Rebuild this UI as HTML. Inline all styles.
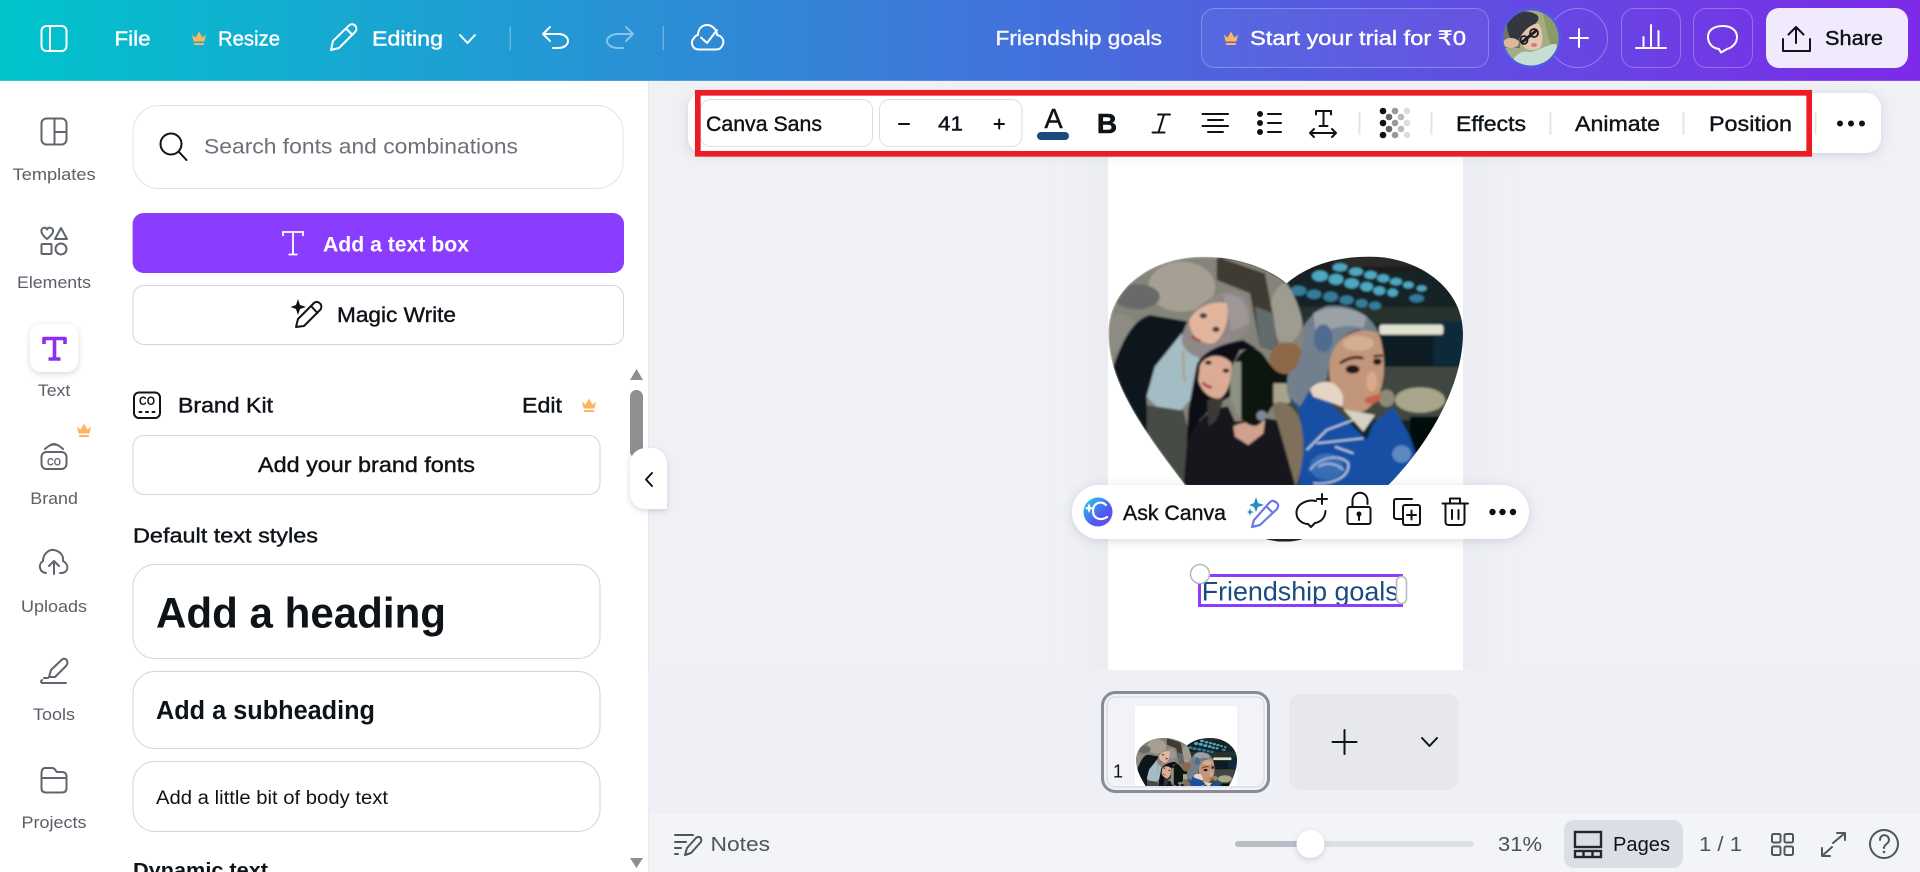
<!DOCTYPE html>
<html lang="en">
<head>
<meta charset="utf-8">
<title>Friendship goals</title>
<style>
html,body{margin:0;padding:0;width:1920px;height:872px;overflow:hidden;background:#f0f1f5}
svg{display:block}
text{font-family:"Liberation Sans","Noto Sans CJK SC",sans-serif;white-space:pre}
.m{stroke-width:.4px}
.wt{fill:#fff}.wm{fill:#fff;stroke:#fff}
.dk{fill:#0e1318}.dm{fill:#0e1318;stroke:#0e1318}
.gr{fill:#5a6068}
.ic{fill:none;stroke:#0e1318;stroke-width:2;stroke-linecap:round;stroke-linejoin:round}
.iw{fill:none;stroke:#fff;stroke-width:2;stroke-linecap:round;stroke-linejoin:round}
.ig{fill:none;stroke:#5f646d;stroke-width:2;stroke-linecap:round;stroke-linejoin:round}
</style>
</head>
<body>
<svg width="1920" height="872" viewBox="0 0 1920 872" xmlns="http://www.w3.org/2000/svg">
<defs>
<linearGradient id="hd" x1="0" x2="1" y1="0" y2="0"><stop offset="0" stop-color="#00c4cc"/><stop offset="1" stop-color="#7d2ae8"/></linearGradient>
<linearGradient id="lg" x1="0" x2="1" y1="0" y2="1"><stop offset="0" stop-color="#22d3ee"/><stop offset=".6" stop-color="#4f5cf0"/><stop offset="1" stop-color="#6b46e8"/></linearGradient>
<filter id="sh" x="-10%" y="-40%" width="120%" height="190%"><feDropShadow dx="0" dy="2" stdDeviation="5" flood-color="#40506a" flood-opacity=".2"/></filter>
<filter id="sh2" x="-40%" y="-40%" width="180%" height="180%"><feDropShadow dx="0" dy="2" stdDeviation="3" flood-color="#40506a" flood-opacity=".22"/></filter>
<filter id="bl" x="-5%" y="-5%" width="110%" height="110%"><feGaussianBlur stdDeviation="3.5"/></filter>
<filter id="bl2" x="-30%" y="-30%" width="160%" height="160%"><feGaussianBlur stdDeviation="14"/></filter>
<clipPath id="heart"><path d="M430 110C280 110 145 200 145 340C145 480 240 620 375 795L610 955Q675 975 735 955L985 795C1100 680 1209 500 1209 340C1209 200 1070 110 930 110C820 110 740 140 680 190C620 140 520 110 430 110Z"/></clipPath>
<clipPath id="lp"><path d="M430 110C280 110 145 200 145 340C145 480 240 620 375 795L610 955L708 800C735 720 735 640 715 590C695 550 660 535 640 555C615 590 605 620 580 618C540 610 510 560 510 500C510 430 540 385 575 385C620 385 625 460 675 462C710 460 735 400 730 330C725 270 700 220 680 190C620 140 520 110 430 110Z"/></clipPath>
<clipPath id="thc"><rect x="1135" y="706" width="102" height="80"/></clipPath>
<clipPath id="avc"><circle cx="1531" cy="38" r="27.5"/></clipPath>
<clipPath id="cv"><rect x="1108" y="150" width="355" height="520"/></clipPath>
<clipPath id="txc"><rect x="1198" y="570" width="200" height="40"/></clipPath>
<g id="crown"><path d="M1 4.5L4.6 7.6L8 1.5L11.4 7.6L15 4.5L13.4 11.5H2.6Z" fill="#fdb55f"/><rect x="3" y="13" width="10" height="2" rx=".6" fill="#fdb55f"/></g>
<g id="hearts">
 <g clip-path="url(#heart)">
  <g filter="url(#bl)">
   <!-- right photo -->
   <rect x="480" y="100" width="740" height="880" fill="#182428"/>
   <g transform="translate(120 90)">
    <rect x="560" y="15" width="540" height="50" fill="#1a1e1e"/>
    <rect x="700" y="20" width="300" height="30" fill="#2c2c28"/>
    <rect x="560" y="170" width="530" height="50" fill="#26332f"/>
    <rect x="840" y="258" width="260" height="95" fill="#0f1b20"/>
    <rect x="1000" y="215" width="100" height="130" fill="#10293a"/>
    <rect x="530" y="350" width="570" height="160" fill="#3f473f"/>
    <ellipse cx="960" cy="450" rx="75" ry="38" fill="#a8a68b"/>
    <ellipse cx="860" cy="445" rx="24" ry="26" fill="#8f8a75"/>
    <rect x="930" y="500" width="130" height="130" fill="#050a0a"/>
    <rect x="838" y="224" width="192" height="30" rx="8" fill="#e0e2d0"/>
    <g fill="#4fa8c2">
     <ellipse cx="720" cy="52" rx="22" ry="12"/><ellipse cx="768" cy="65" rx="21" ry="12"/><ellipse cx="812" cy="75" rx="19" ry="12"/><ellipse cx="850" cy="85" rx="18" ry="12"/><ellipse cx="888" cy="95" rx="18" ry="11"/><ellipse cx="925" cy="105" rx="16" ry="10"/><ellipse cx="965" cy="115" rx="15" ry="9"/>
     <ellipse cx="660" cy="78" rx="24" ry="16"/><ellipse cx="708" cy="88" rx="22" ry="16"/><ellipse cx="755" cy="100" rx="22" ry="15"/><ellipse cx="800" cy="110" rx="19" ry="14"/><ellipse cx="838" cy="122" rx="18" ry="13"/><ellipse cx="878" cy="128" rx="16" ry="12"/>
    </g>
    <g fill="#357c98">
     <ellipse cx="595" cy="122" rx="24" ry="15"/><ellipse cx="642" cy="133" rx="22" ry="14"/><ellipse cx="692" cy="140" rx="22" ry="15"/><ellipse cx="740" cy="150" rx="21" ry="14"/><ellipse cx="785" cy="160" rx="18" ry="13"/><ellipse cx="825" cy="167" rx="18" ry="12"/><ellipse cx="950" cy="145" rx="22" ry="12"/>
    </g>
    <!-- hole -->
    <rect x="380" y="285" width="190" height="250" fill="#0e1210"/>
    <rect x="385" y="335" width="38" height="170" fill="#8d9282"/>
    <rect x="520" y="400" width="50" height="60" fill="#a8a48c"/>
    <ellipse cx="485" cy="497" rx="16" ry="15" fill="#7a8a9a"/>
    <!-- right woman -->
    <path d="M560 400L640 380L700 470L600 480L570 450Z" fill="#24508c"/>
    <path d="M590 455C610 430 650 435 700 470L800 570L820 520L880 470L930 560L950 620L865 715L595 715C605 620 610 540 590 455Z" fill="#1450a4"/>
    <path d="M560 420C565 310 600 200 680 168C760 160 830 200 845 280L780 240C730 240 690 300 680 390L640 400L600 470L565 440Z" fill="#72808e"/>
    <path d="M640 190C680 165 750 170 800 200L790 235C740 220 680 230 650 270Z" fill="#9aa2a8"/>
    <ellipse cx="670" cy="265" rx="28" ry="42" fill="#4f6c8e"/>
    <path d="M690 330C705 260 770 225 835 250C855 300 860 380 835 440C800 495 760 500 735 480C700 440 680 390 690 330Z" fill="#c2967a"/>
    <ellipse cx="775" cy="280" rx="46" ry="22" fill="#d4b092"/>
    <ellipse cx="815" cy="395" rx="16" ry="30" fill="#d8aa8c"/>
    <path d="M720 340Q755 315 790 325" stroke="#2a1c16" stroke-width="8" fill="none"/>
    <path d="M820 320Q835 315 848 318" stroke="#2a1c16" stroke-width="7" fill="none"/>
    <ellipse cx="758" cy="358" rx="21" ry="13" fill="#241915"/>
    <ellipse cx="832" cy="335" rx="13" ry="10" fill="#241915"/>
    <path d="M790 450Q820 430 845 435Q835 465 805 462Z" fill="#c9604a"/>
    <path d="M630 420C640 395 680 390 700 400C730 420 735 450 725 470L700 460L640 440Z" fill="#e6d5c5"/>
    <path d="M730 478L825 495L790 545Z" fill="#d6d2c4"/>
    <g fill="none" stroke="#c8d8ea" stroke-width="5">
     <path d="M620 600L680 540L760 510M650 580L790 565M705 590L760 610"/>
     <path d="M630 660C660 620 720 610 745 640C750 680 700 705 640 700"/>
     <path d="M655 650C680 635 710 640 730 660"/>
    </g>
    <ellipse cx="680" cy="650" rx="50" ry="40" fill="#7fa3d4" opacity=".35"/>
    <ellipse cx="905" cy="612" rx="28" ry="26" fill="#8fb0d6" opacity=".6"/>
   </g>
   <!-- left photo -->
   <g clip-path="url(#lp)">
    <g transform="translate(120 90)">
     <rect x="20" y="10" width="600" height="880" fill="#85847a"/>
     <ellipse cx="245" cy="110" rx="100" ry="75" fill="#a6a094"/>
     <ellipse cx="110" cy="140" rx="70" ry="38" fill="#686a67"/>
     <ellipse cx="60" cy="250" rx="50" ry="60" fill="#8d8b82"/>
     <ellipse cx="560" cy="190" rx="50" ry="90" fill="#a09b90"/>
     <path d="M350 20L495 70L520 200L535 305L480 290L450 130L350 90Z" fill="#3f3a33"/>
     <path d="M465 170L520 190L530 300L480 290Z" fill="#626c6c"/>
     <ellipse cx="560" cy="325" rx="52" ry="48" fill="#8f6746"/>
     <path d="M510 450L615 450L620 710L580 710L530 520Z" fill="#7e705a"/>
     <path d="M30 380C55 300 90 210 150 195L265 215L245 255L165 350L140 440L145 590L255 715L120 600Z" fill="#0d141b"/>
     <path d="M245 250L300 330L290 430L240 482L170 470L140 440L165 350Z" fill="#a4bcc4"/>
     <path d="M140 465L250 482L270 560L265 715L170 610L140 540Z" fill="#454b45"/>
     <path d="M245 265C260 190 320 130 400 122C440 130 460 180 450 225C430 270 360 300 300 322C265 315 245 290 245 265Z" fill="#8f8887"/>
     <path d="M370 135C420 125 450 170 445 220L395 245Z" fill="#9f9797"/>
     <path d="M268 210C290 170 340 150 380 160C390 200 375 260 340 280C310 285 265 260 268 210Z" fill="#e3b59c"/>
     <ellipse cx="310" cy="197" rx="11" ry="8" fill="#33404e"/><ellipse cx="348" cy="238" rx="11" ry="8" fill="#33404e"/>
     <path d="M276 258Q290 272 302 272" stroke="#a33c3a" stroke-width="7" fill="none"/>
     <path d="M250 300C250 340 250 370 255 395" stroke="#b08a3a" stroke-width="4" fill="none"/>
     <path d="M290 345C310 300 370 280 430 270L470 295L420 300L395 350L390 440L340 470L300 510L260 580L265 480Z" fill="#0d0f12"/>
     <path d="M300 345C320 310 370 310 395 340C395 390 385 430 360 445C330 450 300 420 295 390Z" fill="#dcab95"/>
     <ellipse cx="325" cy="338" rx="10" ry="6" fill="#1f1f24"/><ellipse cx="378" cy="362" rx="10" ry="6" fill="#1f1f24"/>
     <path d="M308 398Q322 412 336 412" stroke="#a23a45" stroke-width="8" fill="none"/>
     <path d="M260 585C290 500 340 470 385 470L405 515L500 505L530 510L590 720L250 720Z" fill="#13151a"/>
     <path d="M322 450L372 445L350 510L325 530Z" fill="#3c3939"/>
     <path d="M400 530C420 515 470 515 495 510L490 550L445 585L405 560Z" fill="#cfa18f"/>
    </g>
   </g>
   <rect x="600" y="940" width="150" height="40" fill="#141a22"/>
  </g>
 </g>
</g>
</defs>

<!-- backgrounds -->
<rect width="1920" height="872" fill="#f0f1f5"/>
<rect x="0" y="81" width="648" height="791" fill="#fff"/>
<rect x="648" y="81" width="1" height="791" fill="#e8e9ee"/>
<rect x="0" y="0" width="1920" height="81" fill="url(#hd)"/>
<rect x="0" y="80" width="1920" height="1.5" fill="#fff" opacity=".15"/>

<!-- page -->
<rect x="1085" y="150" width="402" height="540" fill="#e8eaf1" opacity=".6" filter="url(#bl2)"/>
<rect x="1108" y="140" width="355" height="530" fill="#fff"/>
<g clip-path="url(#cv)"><use href="#hearts" transform="translate(1060 220) scale(.33333)"/></g>

<!-- selected text -->
<g clip-path="url(#txc)"><text x="1201.7" y="600.7" font-size="27" textLength="197" lengthAdjust="spacingAndGlyphs" fill="#1b4a7f">Friendship goals</text></g>
<rect x="1199.5" y="575.5" width="202" height="30" fill="none" stroke="#8b3dff" stroke-width="3"/>
<circle cx="1200" cy="574" r="9.5" fill="#fff" stroke="#b6b6bd" stroke-width="1.5"/>
<rect x="1396.5" y="576.5" width="10" height="27" rx="5" fill="#fff" stroke="#b6b6bd" stroke-width="1.5"/>

<!-- bottom thumbs -->
<rect x="648.5" y="670" width="1271.5" height="144" fill="#eff0f5"/>
<rect x="1102.5" y="692.5" width="166" height="99" rx="13" fill="#f2f3f7" stroke="#8a8b99" stroke-width="3"/>
<rect x="1107" y="697" width="157" height="90" rx="8" fill="none" stroke="#dcdde8" stroke-width="1.5"/>
<rect x="1135" y="706" width="102" height="80" fill="#fff"/>
<g clip-path="url(#thc)"><use href="#hearts" transform="translate(1122.2 727.5) scale(.095)"/></g>
<text x="1113" y="777.7" font-size="18.5" textLength="10" lengthAdjust="spacingAndGlyphs" class="dk">1</text>
<rect x="1289" y="694" width="170" height="96" rx="12" fill="#e6e8ed"/>
<path d="M1344.500 730V754M1332.500 742H1356.500" class="ic"/>
<path d="M1422 738L1429.500 746L1437 738" class="ic"/>

<!-- bottom bar -->
<rect x="649" y="814" width="1271" height="58" fill="#f3f4f8"/>
<g class="ig" style="stroke:#50545c">
 <path d="M675 835H693M675 842H686M675 848H681M675 854H678"/>
 <path d="M685 855L687 848L696 838C698 836 701 837 701 839C702 841 701 842 700 843L691 853Z"/>
</g>
<text x="710.500" y="851" font-size="20" textLength="59.500" lengthAdjust="spacingAndGlyphs" fill="#50545c">Notes</text>
<rect x="1235" y="841" width="239" height="6" rx="3" fill="#dcdfe5"/>
<rect x="1235" y="841" width="75" height="6" rx="3" fill="#b7bcc5"/>
<circle cx="1310.500" cy="844" r="14" fill="#fff" filter="url(#sh2)"/>
<text x="1498" y="851" font-size="20" textLength="44" lengthAdjust="spacingAndGlyphs" fill="#4b4f57">31%</text>
<rect x="1564" y="820" width="119" height="48" rx="10" fill="#dcdee5"/>
<g fill="none" stroke="#23262b" stroke-width="2.400">
 <rect x="1575" y="832" width="26" height="15"/>
 <rect x="1575" y="851" width="26" height="6"/>
 <path d="M1583.500 851V857M1592.500 851V857"/>
</g>
<text x="1613" y="851" font-size="20" textLength="57" lengthAdjust="spacingAndGlyphs" class="dk">Pages</text>
<text x="1699" y="851" font-size="20" textLength="43" lengthAdjust="spacingAndGlyphs" fill="#50545c">1 / 1</text>
<g class="ig" style="stroke:#50545c">
 <rect x="1772" y="834" width="8.500" height="8.500" rx="1.500"/><rect x="1784.500" y="834" width="8.500" height="8.500" rx="1.500"/>
 <rect x="1772" y="846.500" width="8.500" height="8.500" rx="1.500"/><rect x="1784.500" y="846.500" width="8.500" height="8.500" rx="1.500"/>
 <path d="M1833 843L1845 833M1837 833H1845V840M1822 856L1832 847M1822 848V856H1830"/>
 <circle cx="1884" cy="844" r="14"/>
 <path d="M1880 840C1880 833 1889 834 1889 840C1889 844 1884 844 1884 848"/>
</g>
<circle cx="1884" cy="852" r="1.300" fill="#50545c"/>

<!-- header left -->
<g class="iw">
 <rect x="41.500" y="26" width="25" height="25" rx="5"/><path d="M50 26V51"/>
 <path d="M331 50L333 41L349 25.500C351 23.500 354 24 355.500 26C357 28 356.500 30.500 355 32L339 48Z M346 28.500L352.500 35"/>
 <path d="M460 35L467.500 43L475 35"/>
 <path d="M550 27L543 34L550 41M543 34H558C564 34 568 37 568 41C568 45 564 48 558 48H553"/>
 <path d="M699 49.500C692 49.500 690 42 694 38C695 36 697 35 698 35C698 28 703 24.500 708 25C714 26 717 31 717 35C723 36 725 42 722 46C721 48.500 719 49.500 716 49.500Z"/>
 <path d="M701 37.500L707 43L717 30"/>
</g>
<g class="iw" opacity=".45">
 <path d="M626 27L633 34L626 41M633 34H618C612 34 607 37 607 41C607 45 612 48 618 48H623"/>
</g>
<rect x="509.500" y="26" width="1.500" height="24" fill="#fff" opacity=".3"/>
<rect x="662.500" y="26" width="1.500" height="24" fill="#fff" opacity=".3"/>
<text x="114.500" y="45.500" font-size="20" textLength="36" lengthAdjust="spacingAndGlyphs" class="wm m">File</text>
<use href="#crown" transform="translate(191 30)"/>
<text x="218" y="45.500" font-size="20" textLength="62" lengthAdjust="spacingAndGlyphs" class="wm m">Resize</text>
<text x="372" y="45.500" font-size="20" textLength="71" lengthAdjust="spacingAndGlyphs" class="wm m">Editing</text>

<!-- header right -->
<text x="995.500" y="45" font-size="20" textLength="166.500" lengthAdjust="spacingAndGlyphs" fill="#fff" stroke="#fff" class="m" opacity=".95">Friendship goals</text>
<rect x="1201.500" y="8.500" width="287" height="59" rx="13" fill="#fff" fill-opacity=".04" stroke="#fff" stroke-opacity=".28"/>
<use href="#crown" transform="translate(1223 30)"/>
<text x="1250" y="45" font-size="20" textLength="216" lengthAdjust="spacingAndGlyphs" class="wm m">Start your trial for ₹0</text>
<circle cx="1578" cy="38" r="29.500" fill="none" stroke="#fff" stroke-opacity=".3"/>
<path d="M1579 29V47M1570 38H1588" class="iw"/>
<circle cx="1531" cy="38" r="30" fill="#4f5ae8"/>
<g clip-path="url(#avc)">
 <rect x="1500" y="8" width="62" height="60" fill="#a5ab82"/>
 <rect x="1500" y="8" width="20" height="40" fill="#6d7466"/>
 <path d="M1542 10H1562V44H1550Z" fill="#8e9a66"/>
 <path d="M1508 16C1515 10 1530 10 1537 15C1541 19 1536 24 1530 28C1522 32 1520 38 1517 42C1510 42 1505 30 1508 16Z" fill="#343640"/>
 <path d="M1521 36C1524 30 1534 22 1539 24C1543 32 1544 42 1540 48C1534 52 1526 50 1523 46Z" fill="#e6c7ad"/>
 <path d="M1521 43L1537 30" stroke="#1d1f26" stroke-width="3"/>
 <ellipse cx="1524" cy="40" rx="3.500" ry="4" fill="none" stroke="#1d1f26" stroke-width="1.800"/><ellipse cx="1534" cy="33" rx="4" ry="4" fill="none" stroke="#1d1f26" stroke-width="1.800"/>
 <ellipse cx="1534" cy="45" rx="3" ry="2" fill="#cf7f7c"/>
 <path d="M1512 68C1512 56 1520 50 1530 52C1538 51 1548 44 1556 44C1560 54 1560 62 1558 68Z" fill="#c6dfd4"/>
 <ellipse cx="1511" cy="43" rx="8" ry="5" fill="#e0b8a0"/>
</g>
<rect x="1621.500" y="8.500" width="59" height="59" rx="13" fill="none" stroke="#fff" stroke-opacity=".28"/>
<path d="M1636 48H1666M1643.500 46V37M1651 46V25M1658.500 46V31" class="iw"/>
<rect x="1693.500" y="8.500" width="59" height="59" rx="13" fill="none" stroke="#fff" stroke-opacity=".28"/>
<path d="M1719 49C1711 48 1708 42 1708 37C1708 30 1714 26 1723 26C1732 26 1737 31 1737 37C1737 44 1731 48 1727 49L1721 52.500Z" class="iw"/>
<rect x="1766" y="8" width="142" height="60" rx="13" fill="#f0eafc"/>
<path d="M1796 43V27M1788.500 34.500L1796 27L1803.500 34.500M1783 39V51H1810V39" class="ic"/>
<text x="1825" y="45" font-size="20" textLength="58" lengthAdjust="spacingAndGlyphs" class="dm m">Share</text>

<!-- nav -->
<g class="ig">
 <rect x="41.500" y="118.500" width="25" height="26" rx="5"/><path d="M54.500 118.500V144.500M54.500 132H66.500"/>
 <path d="M47 239C42 235 41 232 41.500 230C42.500 227 46 227 47 229.500C48 227 52 227 53 230C53.500 232 52 235 47 239Z"/>
 <path d="M61 228L67 239H55Z"/>
 <rect x="41.500" y="244" width="10" height="10" rx="1"/>
 <circle cx="61" cy="249" r="5.500"/>
 <rect x="41.500" y="452" width="25" height="17" rx="5"/>
 <path d="M45 449Q54 440 63 449M49 446Q54 442 59 446"/>
 <path d="M46 573C39 572 38 564 43 561C43 554 49 549 54 550C60 551 64 556 63 561C69 564 69 572 62 573H60M54 574V562M49 566L54 561L59 566"/>
 <path d="M49 677L51 670L62 659.500C64 658 67 659 67 661C68 663 67 665 66 666L55 677Z M42 680Q40 682 42 683H66"/>
 <path d="M44 678H48"/>
 <path d="M41.500 773C41.500 770 43 768 45 768H52C54 768 55 769 56 771L57 772H62C65 772 66.500 774 66.500 776V788C66.500 791 65 792.500 62 792.500H46C43 792.500 41.500 791 41.500 788ZM41.500 778H66.500"/>
</g>
<text x="47" y="465.500" font-size="11" font-weight="700" textLength="14" lengthAdjust="spacingAndGlyphs" fill="#5f646d">CO</text>
<text x="12.600" y="180" font-size="17" textLength="83" lengthAdjust="spacingAndGlyphs" class="gr">Templates</text>
<text x="17" y="288" font-size="17" textLength="74" lengthAdjust="spacingAndGlyphs" class="gr">Elements</text>
<rect x="30" y="324" width="48" height="48" rx="11" fill="#fff" filter="url(#sh2)"/>
<path d="M44 344V338.500H65V344M54.500 338.500V359M48.500 359H60.500" fill="none" stroke="#8b2ff0" stroke-width="3.600" stroke-linejoin="round"/>
<text x="37.900" y="396" font-size="17" textLength="32.400" lengthAdjust="spacingAndGlyphs" class="gr">Text</text>
<use href="#crown" transform="translate(76 422)"/>
<text x="30.300" y="504" font-size="17" textLength="47.600" lengthAdjust="spacingAndGlyphs" class="gr">Brand</text>
<text x="21" y="612" font-size="17" textLength="66" lengthAdjust="spacingAndGlyphs" class="gr">Uploads</text>
<text x="33" y="720" font-size="17" textLength="42" lengthAdjust="spacingAndGlyphs" class="gr">Tools</text>
<text x="21.500" y="828" font-size="17" textLength="65" lengthAdjust="spacingAndGlyphs" class="gr">Projects</text>

<!-- panel -->
<rect x="133" y="105.500" width="490" height="83" rx="26" fill="#fff" stroke="#e4dffa"/>
<circle cx="171" cy="144" r="10.500" class="ic"/><path d="M179 152L186.500 160" class="ic" stroke-width="2.400"/>
<text x="204" y="153.500" font-size="21" textLength="314" lengthAdjust="spacingAndGlyphs" fill="#6c7079">Search fonts and combinations</text>
<rect x="132.600" y="213" width="491.400" height="60" rx="11" fill="#8b3dff"/>
<path d="M283 236V232H303V236M293 232V254.500M288.500 254.500H297.500" fill="none" stroke="#fff" stroke-width="1.800"/>
<text x="323" y="251.500" font-size="21" font-weight="700" textLength="146" lengthAdjust="spacingAndGlyphs" fill="#fff">Add a text box</text>
<rect x="133" y="285.500" width="490.500" height="59" rx="11" fill="#fff" stroke="#d4d5dc"/>
<path d="M296 327L298 319L314 303C316 301 319 302 320.500 304C322 306 321.500 308.500 320 310L304 326Z M311 306L317.500 313" class="ic"/>
<path d="M298 299L300 305L306 307L300 309L298 315L296 309L290.500 307L296 305Z" fill="#0e1318"/>
<text x="337" y="322" font-size="21" textLength="119" lengthAdjust="spacingAndGlyphs" class="dm m">Magic Write</text>

<rect x="134" y="392.500" width="26" height="25.500" rx="5" class="ic"/>
<text x="139" y="405" font-size="12" font-weight="700" textLength="16" lengthAdjust="spacingAndGlyphs" class="dk">CO</text>
<path d="M139.500 412H141.500M146 412H148M152.500 412H154.500" class="ic" stroke-width="2.500"/>
<text x="178" y="412.700" font-size="21" textLength="95" lengthAdjust="spacingAndGlyphs" class="dm m">Brand Kit</text>
<text x="522" y="412.700" font-size="21" textLength="40" lengthAdjust="spacingAndGlyphs" class="dm m">Edit</text>
<use href="#crown" transform="translate(581 397)"/>
<rect x="133" y="435.500" width="467" height="59" rx="11" fill="#fff" stroke="#d4d5dc"/>
<text x="258" y="472" font-size="21" textLength="217" lengthAdjust="spacingAndGlyphs" class="dm m">Add your brand fonts</text>
<text x="133" y="542.700" font-size="20.500" textLength="185" lengthAdjust="spacingAndGlyphs" class="dm m">Default text styles</text>
<rect x="133" y="564.500" width="467" height="94" rx="22" fill="#fff" stroke="#d4d5dc"/>
<text x="156" y="627.700" font-size="43" font-weight="700" textLength="290" lengthAdjust="spacingAndGlyphs" class="dk">Add a heading</text>
<rect x="133" y="671.500" width="467" height="77" rx="22" fill="#fff" stroke="#d4d5dc"/>
<text x="156" y="719" font-size="25.500" font-weight="700" textLength="219" lengthAdjust="spacingAndGlyphs" class="dk">Add a subheading</text>
<rect x="133" y="761.500" width="467" height="70" rx="22" fill="#fff" stroke="#d4d5dc"/>
<text x="156" y="804" font-size="19" textLength="232" lengthAdjust="spacingAndGlyphs" class="dk">Add a little bit of body text</text>
<text x="133" y="877" font-size="20" font-weight="700" textLength="135" lengthAdjust="spacingAndGlyphs" class="dk">Dynamic text</text>

<!-- scrollbar & collapse -->
<path d="M630 380L636.500 369L643 380Z" fill="#8f8f8f"/>
<rect x="630" y="390" width="13" height="68" rx="6.500" fill="#8f8f8f"/>
<path d="M630 858L636.500 868L643 858Z" fill="#8f8f8f"/>
<path d="M648 448H646C637 448 630 455 630 464V493C630 502 637 509 646 509H667V464C667 455 660 448 651 448Z" fill="#fff" filter="url(#sh2)"/>
<path d="M652 473L646 479.500L652 486" class="ic"/>

<!-- text toolbar -->
<rect x="688" y="93" width="1193" height="60" rx="15" fill="#fff" filter="url(#sh)"/>
<rect x="700.500" y="99.500" width="172" height="47" rx="10" fill="#fff" stroke="#dcdde3"/>
<text x="706" y="131" font-size="21" textLength="116" lengthAdjust="spacingAndGlyphs" class="dm m">Canva Sans</text>
<rect x="879.500" y="99.500" width="142.500" height="47" rx="10" fill="#fff" stroke="#dcdde3"/>
<path d="M899 124H909M994.500 124H1004M999.200 119.500V128.500" class="ic"/>
<text x="938" y="130.500" font-size="20" textLength="25" lengthAdjust="spacingAndGlyphs" class="dm m">41</text>
<text x="1053.500" y="128" font-size="27.500" text-anchor="middle" class="dk" stroke="#0e1318" stroke-width=".4">A</text>
<rect x="1037" y="132" width="32" height="8" rx="4" fill="#184a80"/>
<text x="1107" y="133" font-size="28" font-weight="700" text-anchor="middle" class="dk" stroke="#0e1318" stroke-width=".6">B</text>
<path d="M1158 114.500H1170M1152.500 132.500H1164.500M1164 114.500L1158.500 132.500" class="ic"/>
<path d="M1202.500 114H1228M1208 120H1223M1202.500 126H1228M1208 132H1223" class="ic"/>
<circle cx="1260" cy="114" r="3" fill="#0e1318"/><circle cx="1260" cy="123" r="3" fill="#0e1318"/><circle cx="1260" cy="132" r="3" fill="#0e1318"/>
<path d="M1268 114H1281M1268 123H1281M1268 132H1281" class="ic"/>
<path d="M1316 114.500V111H1331V114.500M1323.500 111V126M1319.500 126H1327.500" class="ic"/>
<path d="M1310 133H1336M1314 129L1310 133L1314 137M1332 129L1336 133L1332 137" class="ic"/>
<g fill="#e3e5ea">
 <rect x="1358.500" y="112" width="2" height="23"/><rect x="1430.500" y="112" width="2" height="23"/><rect x="1549.500" y="112" width="2" height="23"/><rect x="1682.500" y="112" width="2" height="23"/><rect x="1814.500" y="112" width="2" height="23"/>
</g>
<g>
 <circle cx="1383" cy="111" r="3.300" fill="#111"/><circle cx="1395" cy="111" r="3.300" fill="#999"/><circle cx="1407" cy="111" r="3.300" fill="#ddd"/>
 <circle cx="1389" cy="117" r="3.300" fill="#666"/><circle cx="1401" cy="117" r="3.300" fill="#bbb"/>
 <circle cx="1383" cy="123" r="3.300" fill="#111"/><circle cx="1395" cy="123" r="3.300" fill="#999"/><circle cx="1407" cy="123" r="3.300" fill="#ddd"/>
 <circle cx="1389" cy="129" r="3.300" fill="#666"/><circle cx="1401" cy="129" r="3.300" fill="#bbb"/>
 <circle cx="1383" cy="135" r="3.300" fill="#111"/><circle cx="1395" cy="135" r="3.300" fill="#999"/><circle cx="1407" cy="135" r="3.300" fill="#ddd"/>
</g>
<text x="1456" y="131" font-size="21" textLength="70" lengthAdjust="spacingAndGlyphs" class="dm m">Effects</text>
<text x="1575" y="131" font-size="21" textLength="85" lengthAdjust="spacingAndGlyphs" class="dm m">Animate</text>
<text x="1709" y="131" font-size="21" textLength="83" lengthAdjust="spacingAndGlyphs" class="dm m">Position</text>
<circle cx="1840" cy="123.500" r="3" fill="#0e1318"/><circle cx="1851" cy="123.500" r="3" fill="#0e1318"/><circle cx="1862" cy="123.500" r="3" fill="#0e1318"/>
<rect x="697.800" y="92.800" width="1111.400" height="61" fill="none" stroke="#ec1c24" stroke-width="5.700"/>

<!-- floating ask canva -->
<rect x="1072" y="485" width="457" height="54" rx="27" fill="#fff" filter="url(#sh)"/>
<circle cx="1098" cy="512" r="14.500" fill="url(#lg)"/>
<path d="M1106 505C1101 500 1093 503 1093 511C1093 519 1101 521 1107 517" fill="none" stroke="#fff" stroke-width="2.200" stroke-linecap="round"/>
<path d="M1089 503L1090.500 507L1094 508L1090.500 509.500L1089 513L1087.500 509.500L1084.500 508L1087.500 507Z" fill="#fff"/>
<text x="1123" y="520" font-size="21.500" textLength="103" lengthAdjust="spacingAndGlyphs" class="dm m">Ask Canva</text>
<path d="M1252 527L1254 520L1270 502C1272 500 1275 501 1277 503C1279 505 1278 507 1277 509L1260 525Z M1266 506L1273 513" fill="none" stroke="#6b78ea" stroke-width="2.200" stroke-linejoin="round"/>
<path d="M1256 497L1258 503L1264 505L1258 507L1256 512L1254 507L1249 505L1254 503Z" fill="#2a8ec4"/>
<path d="M1250 508L1251 511L1254 512L1251 513L1250 516L1249 513L1247 512L1249 511Z" fill="#2a8ec4"/>
<path d="M1316 501C1307 499 1297 504 1296.500 512C1296 520 1303 524 1308 524L1311 527L1315 523C1321 522 1325 518 1325.500 511" class="ic"/>
<path d="M1322 494V504M1317 499H1327" class="ic"/>
<rect x="1347.500" y="507" width="23" height="17" rx="2" class="ic"/>
<path d="M1352.500 507V501C1352.500 490 1367.500 490 1367.500 501V504" class="ic"/>
<circle cx="1359" cy="514" r="2.500" fill="#0e1318"/><path d="M1359 515V520" class="ic"/>
<path d="M1412 499H1396C1394.500 499 1394 500 1394 501V517C1394 518 1394.500 518.500 1396 519H1402" class="ic"/>
<rect x="1403" y="505" width="17" height="20" rx="2" class="ic"/>
<path d="M1411.500 510.500V519.500M1407 515H1416" class="ic"/>
<path d="M1442.500 503.500H1468M1450 503V498.500H1460V503M1445.500 504V522C1445.500 524 1447 525 1448.500 525H1461.500C1463 525 1464.500 524 1464.500 522V504M1452 510V519M1458.500 510V519" class="ic"/>
<circle cx="1492.500" cy="512" r="3.200" fill="#0e1318"/><circle cx="1502.500" cy="512" r="3.200" fill="#0e1318"/><circle cx="1513" cy="512" r="3.200" fill="#0e1318"/>
</svg>
</body>
</html>
